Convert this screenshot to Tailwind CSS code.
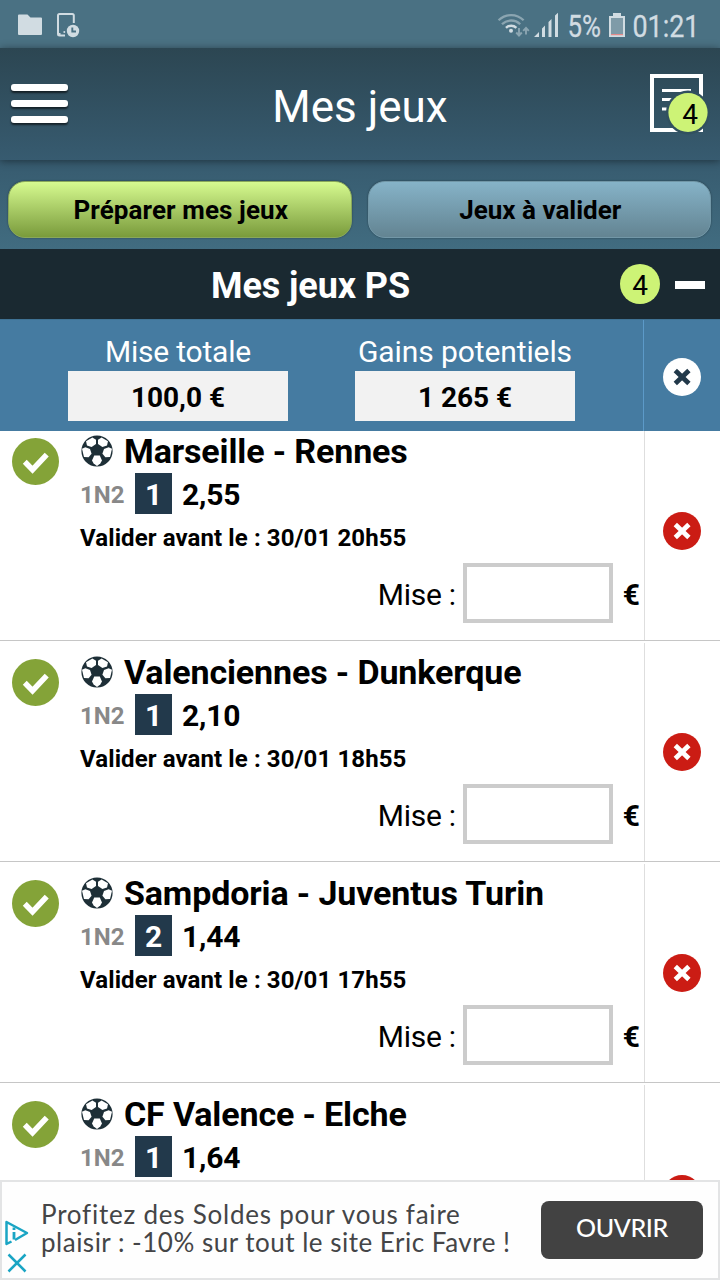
<!DOCTYPE html>
<html lang="fr">
<head>
<meta charset="utf-8">
<title>Mes jeux</title>
<script src="https://cdn.jsdelivr.net/npm/@tailwindcss/browser@4"></script>
</head>
<body class="w-[720px] h-[1280px] overflow-hidden bg-white font-[Roboto,sans-serif] text-black">
<svg class="hidden">
  <defs>
    <symbol id="check" viewBox="0 0 46 46"><circle cx="23" cy="23" r="23" fill="#84a338"/><path d="M12.5 23.2l7.6 7.8L34 16.2" fill="none" stroke="#fff" stroke-width="5.4"/></symbol>
    <clipPath id="bc"><circle cx="16" cy="16" r="14.4"/></clipPath>
    <symbol id="ball" viewBox="0 0 32 32">
      <circle cx="16" cy="16" r="15.6" fill="#1e2f37"/>
      <g fill="#fff" clip-path="url(#bc)">
        <path d="M11.4 2.600L15 4.800V9L10.600 12 6 10.400 5 6.300z"/>
        <path d="M20.600 2.600L17 4.800V9L21.400 12 26 10.400 27 6.300z"/>
        <path d="M1 13.800L4.400 12.200 9 13.900 10.600 18.800 7.600 22.300 3 22z"/>
        <path d="M31 13.800L27.600 12.200 23 13.900 21.400 18.800 24.400 22.300 29 22z"/>
        <path d="M13.200 20.600h5.600L21 25.400 19.300 28.500 16 31 12.700 28.500 11 25.400z"/>
      </g>
      <path d="M16 10.300L21.200 14 19.300 20H12.700L10.800 14z" fill="#1e2f37"/>
    </symbol>
    <symbol id="cross" viewBox="0 0 38 38"><circle cx="19" cy="19" r="19" fill="currentColor"/></symbol>
  </defs>
</svg>

<!-- status bar -->
<div class="h-[48px] bg-[#4a7183] flex items-center">
  <svg class="w-[100px] h-[48px]" viewBox="0 0 100 48">
    <path d="M19 14.500h8.500l3 3H41a1 1 0 0 1 1 1V34a1 1 0 0 1-1 1H19a1 1 0 0 1-1-1V15.500a1 1 0 0 1 1-1z" fill="#d1dce2"/>
    <path d="M73.800 23V15.500a1.500 1.500 0 0 0-1.500-1.500H59.500A1.500 1.500 0 0 0 58 15.500V34a1.500 1.500 0 0 0 1.500 1.500H65" fill="none" stroke="#d1dce2" stroke-width="2"/>
    <path d="M58 33h2.500v3H58z" fill="#d1dce2"/><circle cx="64.300" cy="32" r="1" fill="#d1dce2"/>
    <circle cx="73" cy="31" r="6.200" fill="#d1dce2"/><path d="M72.300 27.500V31.500H76" fill="none" stroke="#4a7183" stroke-width="1.900"/>
  </svg>
  <svg class="w-[240px] h-[48px] ml-auto" viewBox="480 0 240 48">
    <g fill="none" stroke-width="2.300">
      <path d="M498.600 20.300a17.500 17.500 0 0 1 25 0M502 24.300a12.800 12.800 0 0 1 18.200 0" stroke="#8ba5b1"/>
      <path d="M506 27.800a7.500 7.500 0 0 1 10.400 0" stroke="#d1dce2" stroke-width="2.500"/>
      <path d="M519 28v7M516.200 32.500l2.800 3 2.800-3M526 34.500v-6.500M523.200 30.800l2.800-3 2.800 3" stroke="#8ba5b1" stroke-width="1.900"/>
    </g>
    <circle cx="511" cy="30.800" r="2" fill="#d1dce2"/>
    <path d="M534 37l5-5v5zM542 28.500l3-3V37h-3zM548.500 22l3-3V37h-3zM555 15.500l3-2.800V37h-3z" fill="#d1dce2"/>
    <text x="567.500" y="36.500" font-size="31.500" textLength="33.500" lengthAdjust="spacingAndGlyphs" fill="#d1dce2" stroke="#d1dce2" stroke-width="0.300">5%</text>
    <path d="M613 13h8v3h4v21h-16V16h4z" fill="#d1dce2"/><path d="M611 18h12v16.500h-12z" fill="#7f9ba8"/><path d="M611 34h12v1.200h-12z" fill="#e58a8a"/>
    <text x="632.500" y="36.500" font-size="31.500" textLength="67" lengthAdjust="spacingAndGlyphs" fill="#d1dce2" stroke="#d1dce2" stroke-width="0.300">01:21</text>
  </svg>
</div>

<!-- header -->
<header class="h-[112px] bg-linear-to-b from-[#2c4652] to-[#375b70] flex items-center justify-between relative z-10 shadow-[0_1px_8px_rgba(0,0,0,0.45)]">
  <div class="w-[57px] ml-[11px] flex flex-col gap-[9px] mb-[1px]">
    <div class="h-[7px] rounded-[3px] bg-white shadow-[0_2px_2px_rgba(0,0,0,0.6)]"></div>
    <div class="h-[7px] rounded-[3px] bg-white shadow-[0_2px_2px_rgba(0,0,0,0.6)]"></div>
    <div class="h-[7px] rounded-[3px] bg-white shadow-[0_2px_2px_rgba(0,0,0,0.6)]"></div>
  </div>
  <h1 class="text-[44px] leading-[60px] text-white whitespace-nowrap pt-[6px] ml-[128px] mr-auto w-[328px] text-center">Mes jeux</h1>
  <svg class="w-[76px] h-[112px]" viewBox="644 48 76 112">
    <path d="M652 76h49v54h-49z" fill="none" stroke="#fff" stroke-width="4"/>
    <path d="M662 89h29v3h-29zM662 98h29v3h-29zM662 107.500h29v3h-29z" fill="#fff"/>
    <circle cx="688" cy="112.500" r="22" fill="#31505f"/>
    <circle cx="688" cy="112.500" r="19.600" fill="#cdf376"/>
    <text x="690" y="124" font-size="28" text-anchor="middle">4</text>
  </svg>
</header>

<!-- tabs -->
<div class="h-[89px] bg-linear-to-b from-[#375b6f] to-[#416c80] flex gap-[16px] pl-[8px] pr-[9px] pt-[21px]">
  <div class="flex-1 h-[57px] rounded-[17px] bg-linear-to-b from-[#d7fb90] to-[#7a9b3b] border border-[#8aa85a] shadow-[0_0_2px_rgba(0,0,0,0.4)] flex items-center justify-center text-[26px] font-bold pt-[2px] pl-[2px] tracking-[0.1px]">Préparer mes jeux</div>
  <div class="flex-1 h-[57px] rounded-[17px] bg-linear-to-b from-[#86b3c8] to-[#638492] border border-[#7297a7] shadow-[0_0_2px_rgba(0,0,0,0.4)] flex items-center justify-center text-[26px] font-bold pt-[2px] pl-[2px]">Jeux à valider</div>
</div>

<!-- section title -->
<div class="h-[70px] bg-[#1a2931] flex items-center">
  <h2 class="w-[620px] text-center text-[36px] tracking-[-0.1px] font-bold text-white pt-[4px] pl-[1px]">Mes jeux PS</h2>
  <div class="size-[40px] rounded-full bg-[#cdf376] flex items-center justify-center text-[28px] pt-[3px]">4</div>
  <div class="ml-[15px] mt-[2px] w-[30px] h-[8px] bg-white"></div>
</div>

<!-- totals -->
<div class="h-[112px] bg-[#457ba1] flex border-t border-[#3f7294]">
  <div class="w-[643px] flex pl-[68px] gap-[67px] pt-[14px]">
    <div class="w-[220px] text-center"><div class="h-[37px] leading-[35px] text-[30px] tracking-[-0.2px] text-white whitespace-nowrap">Mise totale</div><div class="h-[50px] leading-[53px] bg-[#f2f2f2] text-[28px] font-bold">100,0 €</div></div>
    <div class="w-[220px] text-center"><div class="h-[37px] leading-[35px] text-[30px] tracking-[-0.1px] text-white whitespace-nowrap">Gains potentiels</div><div class="h-[50px] leading-[53px] bg-[#f2f2f2] text-[28px] font-bold">1 265 €</div></div>
  </div>
  <div class="flex-1 border-l border-[#5c9ac8] flex items-center justify-center pt-[3px]">
    <svg class="size-[38px] text-white" viewBox="0 0 38 38"><use href="#cross"/><path d="M12.300 12.500l13.600 13M25.900 12.500l-13.600 13" stroke="#22394a" stroke-width="4.800"/></svg>
  </div>
</div>

<!-- bets -->
<main class="h-[749px] overflow-hidden">
<div id="list" class="-mt-[11px]"></div>
</main>
<template id="row">
  <div class="h-[221px] border-b border-[#c6c6c6] flex">
    <div class="w-[80px] pl-[12px] pt-[18px] shrink-0"><svg class="size-[47px]"><use href="#check"/></svg></div>
    <div class="w-[564px] pt-[12px]">
      <div class="h-[39px] flex items-center gap-[11px] pl-[1px]"><svg class="size-[32px] mb-[2px]"><use href="#ball"/></svg><span data-k="t" class="text-[34px] tracking-[-0.13px] leading-[39px] font-bold whitespace-nowrap"></span></div>
      <div class="mt-[2px] h-[41px] flex items-center font-bold"><span class="w-[55px] text-[24px] text-[#888] pt-[2px]">1N2</span><span data-k="p" class="w-[37px] h-[41px] leading-[43px] bg-[#22394b] text-white text-center text-[30px]"></span><span data-k="o" class="ml-[10px] text-[30px] tracking-[-0.2px] leading-[41px] pt-[2px]"></span></div>
      <div data-k="d" class="mt-[12px] h-[24px] leading-[24px] text-[24px] tracking-[0.1px] font-bold whitespace-nowrap"></div>
      <div data-stake class="mt-[13px] h-[60px] flex items-center justify-end text-[30px] pr-[4px]"><span class="pt-[3px] mr-[7px] tracking-[-0.25px]">Mise :</span><span class="w-[150px] h-[60px] border-4 border-[#ccc] bg-white"></span><span class="ml-[10px] pt-[3px] font-bold">€</span></div>
    </div>
    <div class="flex-1 mt-[2px] border-l border-[#dedede] pl-[18px] pt-[90px]"><svg class="size-[38px] text-[#cb1c14]" viewBox="0 0 38 38"><use href="#cross"/><path d="M12.300 12.500l13.600 13M25.900 12.500l-13.600 13" stroke="#fff" stroke-width="4.800"/></svg></div>
  </div>
</template>

<!-- advertisement -->
<div class="h-[100px] border-2 border-[#e3e4e5] bg-[#fefefe] flex font-[Lato,sans-serif]">
  <svg class="w-[39px] h-[96px] shrink-0" viewBox="2 1182 39 96" fill="none" stroke="#1aa5c4">
    <path d="M11.500 1241.500L6.500 1244V1222L27 1233L15 1240" stroke-width="2.500" stroke-linejoin="round"/>
    <path d="M14 1232v7.500M14 1227.500v2.500" stroke-width="2.800"/>
    <path d="M8.500 1254.500l17 17M25.500 1254.500l-17 17" stroke-width="2.500"/>
  </svg>
  <p class="w-[500px] shrink-0 pt-[18px] text-[26px] leading-[28px] text-[#444547] whitespace-nowrap"><span class="tracking-[0.77px]">Profitez des Soldes pour vous faire</span><br><span class="tracking-[0.5px]">plaisir : -10% sur tout le site Eric Favre !</span></p>
  <div class="mt-[19px] w-[162px] h-[58px] shrink-0 rounded-[8px] bg-[#424242] text-white text-[25px] tracking-[-0.4px] font-medium flex items-center justify-center pb-[4px]">OUVRIR</div>
</div>

<script>
const bets = [
  {t:'Marseille - Rennes', p:'1', o:'2,55', d:'Valider avant le : 30/01 20h55'},
  {t:'Valenciennes - Dunkerque', p:'1', o:'2,10', d:'Valider avant le : 30/01 18h55'},
  {t:'Sampdoria - Juventus Turin', p:'2', o:'1,44', d:'Valider avant le : 30/01 17h55'},
  {t:'CF Valence - Elche', p:'1', o:'1,64'},
];
for (const b of bets) {
  const n = document.getElementById('row').content.cloneNode(true);
  n.querySelectorAll('[data-k]').forEach(e => e.textContent = b[e.dataset.k] || '');
  if (!b.d) n.querySelector('[data-stake]').remove();
  document.getElementById('list').append(n);
}
</script>
</body>
</html>
